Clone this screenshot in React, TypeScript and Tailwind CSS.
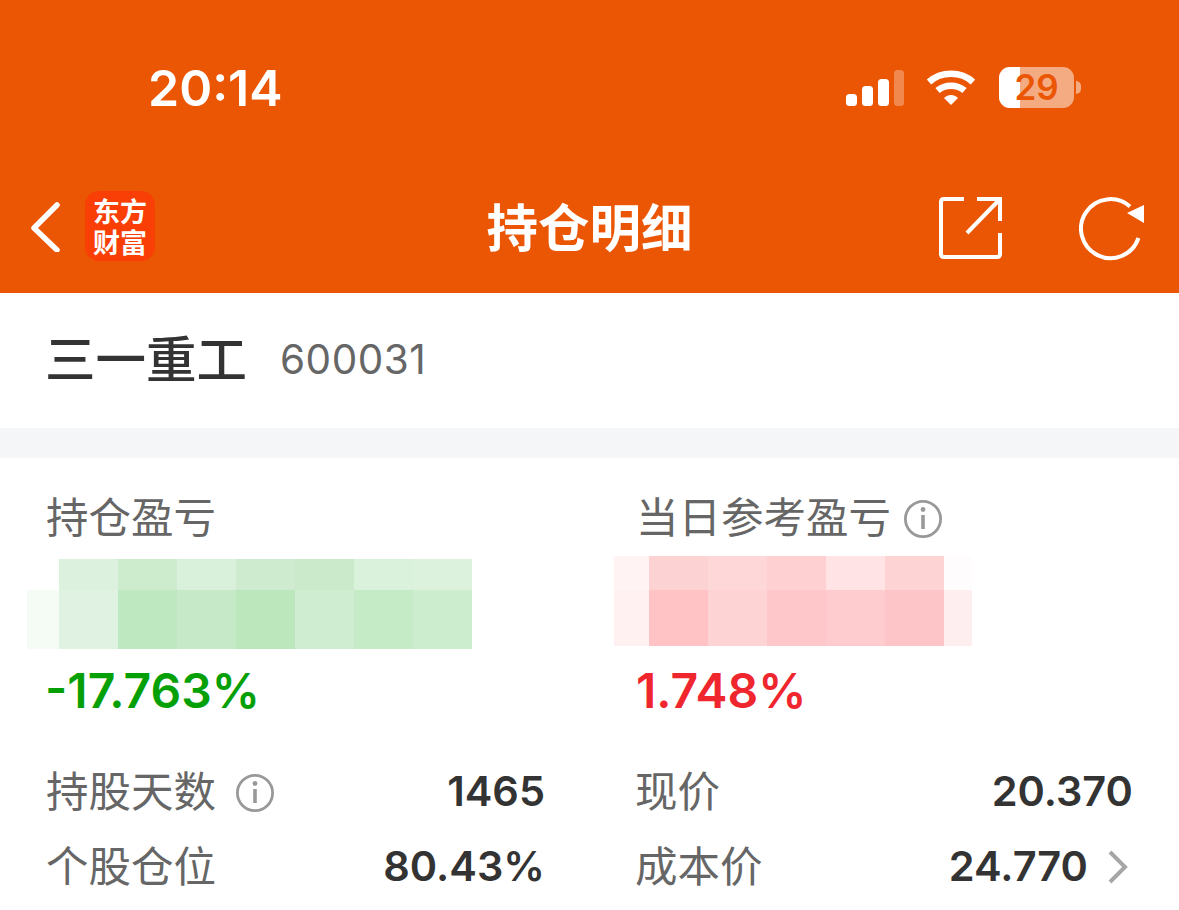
import React from 'react';

const FONT = { fontFamily: 'Inter, "Noto Sans CJK SC", sans-serif' };

const greenTop = ['#ffffff', '#ddf1df', '#cdebcd', '#d9f0da', '#cfebcf', '#cbeacb', '#daf1dc', '#dcf2dd'];
const greenBottom = ['#f5fbf5', '#e0f3e2', '#bee8c0', '#c6eac7', '#bce6bb', '#cfeed1', '#c5eac6', '#cdedcf'];
const pinkTop = ['#fff3f4', '#fdd2d3', '#fed7d8', '#fed0d1', '#ffe3e5', '#fdd3d4', '#fffcfd'];
const pinkBottom = ['#fff0f1', '#ffc3c6', '#fdd3d4', '#fec8ca', '#fecbce', '#fdc5c7', '#ffeeef'];

const Mosaic = ({ rows, first, last, topH, bottomH }: { rows: string[][]; first: number; last: number; topH: number; bottomH: number }) => (
  <div className="flex flex-col">
    {rows.map((row, r) => (
      <div key={r} className="flex" style={{ height: r === 0 ? topH : bottomH }}>
        {row.map((color, i) => (
          <div
            key={i}
            style={{
              backgroundColor: color,
              width: i === 0 ? first : i === row.length - 1 && last ? last : 59,
            }}
          />
        ))}
      </div>
    ))}
  </div>
);

const InfoIcon = ({ className }: { className?: string }) => (
  <svg width="40" height="40" viewBox="0 0 40 40" fill="none" stroke="#999999" className={className}>
    <circle cx="20" cy="20" r="17.6" strokeWidth="2.8" />
    <circle cx="20" cy="10.5" r="2.4" fill="#999999" stroke="none" />
    <path d="M20 16 V30" strokeWidth="3.6" />
  </svg>
);

const Stat = ({ label, value, info, arrow, right }: { label: string; value: string; info?: boolean; arrow?: boolean; right?: boolean }) => (
  <div className="flex h-[75px] items-center justify-between">
    <div className={`flex items-center text-[42.5px] leading-none text-[#666666] ${right ? '-ml-[1px]' : '-ml-[1px]'}`}>
      <span>{label}</span>
      {info && <InfoIcon className="ml-[19px]" />}
    </div>
    <div className="-mr-[1px] -mt-[2px] flex items-center">
      <span className="text-[41.5px] font-semibold leading-none text-[#333333]">{value}</span>
      {arrow && (
        <svg width="22" height="36" viewBox="0 0 22 36" fill="none" stroke="#a6a6a6" strokeWidth="4" className="ml-[19px] mr-[4px]">
          <path d="M3 3 L18 18 L3 33" />
        </svg>
      )}
    </div>
  </div>
);

export default function App() {
  return (
    <div className="flex h-[910px] w-[1179px] flex-col overflow-hidden bg-white" style={FONT}>
      <div className="h-[293px] shrink-0 bg-[#eb5604] text-white">
        {/* status bar */}
        <div className="flex h-[176px] items-center justify-between pl-[148px] pr-[97px]">
          <span className="text-[50px] font-semibold leading-none">20:14</span>
          <div className="flex items-center gap-[22px]">
            <svg width="58" height="36" viewBox="0 0 58 36">
              <rect x="0" y="24" width="11" height="12" rx="3.5" fill="#fff" />
              <rect x="16" y="16" width="11" height="20" rx="3.5" fill="#fff" />
              <rect x="32" y="9" width="11" height="27" rx="3.5" fill="#fff" />
              <rect x="48" y="0" width="10" height="36" rx="3.5" fill="#fff" fillOpacity="0.3" />
            </svg>
            <svg width="50" height="36" viewBox="0 0 50 36" fill="none" stroke="#fff" strokeWidth="6.5">
              <path d="M3 12 C15 1 35 1 47 12" />
              <path d="M11.5 20.5 C19 14 31 14 38.5 20.5" />
              <path d="M18 28 L25 35 L32 28 C28 24 22 24 18 28 Z" fill="#fff" stroke="none" />
            </svg>
            <div className="relative -mt-[2px] ml-[1px] flex h-[41px] w-[83px] items-center">
              <div className="relative h-[41px] w-[75px] overflow-hidden rounded-[11px] bg-white/50">
                <div className="h-full w-[21px] bg-white" />
              </div>
              <div className="ml-[2px] h-[13px] w-[5px] rounded-r-full bg-white/50" />
              <span className="absolute left-0 top-0 flex h-[41px] w-[75px] items-center justify-center text-[35px] font-semibold leading-none text-[#eb5604]">
                29
              </span>
            </div>
          </div>
        </div>
        {/* nav bar */}
        <div className="grid h-[117px] grid-cols-[1fr_auto_1fr] items-start pl-[34px] pr-[34px] pt-[15px]">
          <div className="-ml-[4px] flex items-center">
            <svg width="30" height="50" viewBox="0 0 30 50" fill="none" stroke="#fff" strokeWidth="5.5" strokeLinecap="round" strokeLinejoin="round" className="mt-[1px]">
              <path d="M27 3 L4 26 L27 48" />
            </svg>
            <div className="ml-[25px] flex h-[70px] w-[70px] flex-col items-center justify-center rounded-[14px] bg-[#f93f05] text-[27px] font-bold text-white" style={{ fontFamily: '"Noto Sans CJK SC", sans-serif' }}>
              <span className="h-[31px] leading-[31px]">东方</span>
              <span className="h-[31px] leading-[31px]">财富</span>
            </div>
          </div>
          <span className="mt-[6px] text-[51.5px] font-bold leading-[62px]">持仓明细</span>
          <div className="mt-[4px] flex items-center justify-end gap-[76px]">
            <svg width="64" height="66" viewBox="0 0 64 66" fill="none" stroke="#fff" strokeWidth="4">
              <path d="M25 4 H5 Q2 4 2 7 V59 Q2 62 5 62 H58 Q61 62 61 59 V38" />
              <path d="M38 4 H61 V26" />
              <path d="M61 4 L28 38" />
            </svg>
            <svg width="66" height="66" viewBox="0 0 66 66" fill="none" stroke="#fff" strokeWidth="4">
              <path d="M59.5 43 A29.5 29.5 0 1 1 51 11.5" />
              <path d="M48 18 L65 10 V28 Z" fill="#fff" stroke="none" />
            </svg>
          </div>
        </div>
      </div>

      <div className="flex h-[135px] shrink-0 items-center pl-[45px]">
        <span className="text-[50.5px] font-medium leading-none text-[#333333]">三一重工</span>
        <span className="ml-[33px] text-[40.5px] leading-none tracking-[0.5px] text-[#666666]">600031</span>
      </div>
      <div className="h-[30px] shrink-0 bg-[#f5f6f8]" />

      <div className="flex gap-[92px] pl-[47px] pr-[47px] pt-[38px]">
        <div className="w-[497px]">
          <div className="-ml-[1px] flex h-[45px] items-center text-[42.5px] leading-none text-[#666666]">持仓盈亏</div>
          <div className="-ml-[20px] mt-[18px]">
            <Mosaic rows={[greenTop, greenBottom]} first={32} last={0} topH={31} bottomH={59} />
          </div>
          <div className="-ml-[2px] mt-[14px] text-[48px] font-semibold leading-[56px] text-[#05a005]">-17.763%</div>
          <div className="mt-[36px]">
            <Stat label="持股天数" value="1465" info />
            <Stat label="个股仓位" value="80.43%" />
          </div>
        </div>
        <div className="flex-1">
          <div className="flex h-[45px] items-center text-[42.5px] leading-none text-[#666666]">
            <span>当日参考盈亏</span>
            <InfoIcon className="ml-[12px]" />
          </div>
          <div className="-ml-[22px] mt-[15px]">
            <Mosaic rows={[pinkTop, pinkBottom]} first={35} last={28} topH={34} bottomH={56} />
          </div>
          <div className="mt-[17px] text-[48px] font-semibold leading-[56px] text-[#f0262f]">1.748%</div>
          <div className="mt-[36px]">
            <Stat label="现价" value="20.370" right />
            <Stat label="成本价" value="24.770" arrow right />
          </div>
        </div>
      </div>
    </div>
  );
}
